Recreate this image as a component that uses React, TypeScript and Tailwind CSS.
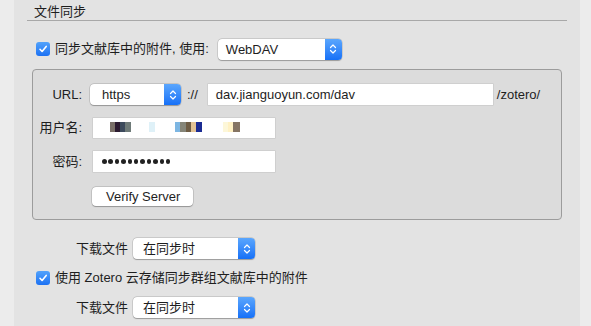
import React from "react";

const font = {
  fontFamily: '"Liberation Sans", "Noto Sans CJK SC", sans-serif',
};

const Chevrons = () => (
  <svg width="8" height="12" viewBox="0 0 8 12" fill="none">
    <path d="M1.5 4.5 L4 2 L6.5 4.5" stroke="white" strokeWidth="1.2" strokeLinecap="round" strokeLinejoin="round" />
    <path d="M1.5 7.5 L4 10 L6.5 7.5" stroke="white" strokeWidth="1.2" strokeLinecap="round" strokeLinejoin="round" />
  </svg>
);

const Select = ({ value, width, pad }: { value: string; width: string; pad: string }) => (
  <div
    className={`flex h-[21px] ${width} rounded-[4px] bg-white shadow-[0_0_0_0.5px_rgba(0,0,0,0.18),0_0.5px_1px_rgba(0,0,0,0.25)]`}
  >
    <span className={`flex-1 ${pad} text-[13px] leading-[21px] text-[#1e1e1e]`}>{value}</span>
    <span className="flex w-[17px] items-center justify-center rounded-r-[4px] bg-gradient-to-b from-[#5aa6fd] to-[#1570f7]">
      <Chevrons />
    </span>
  </div>
);

const Checkbox = () => (
  <span className="flex h-[14px] w-[14px] items-center justify-center rounded-[3px] bg-gradient-to-b from-[#52a2fb] to-[#1c71f3]">
    <svg width="10" height="10" viewBox="0 0 10 10" fill="none">
      <path d="M2 5.3 L4.1 7.5 L8.2 2.4" stroke="white" strokeWidth="1.6" strokeLinecap="round" strokeLinejoin="round" />
    </svg>
  </span>
);

// pixelated (blurred) username
const blurBlocks = [
  { x: 17, w: 5, c: "#7a7068" },
  { x: 22, w: 5, c: "#2c1b30" },
  { x: 27, w: 5, c: "#3c4a5c" },
  { x: 32, w: 6, c: "#6e7a78" },
  { x: 56, w: 6, c: "#dff1f8" },
  { x: 82, w: 5, c: "#7db6e2" },
  { x: 87, w: 6, c: "#858578" },
  { x: 93, w: 5, c: "#6e5c44" },
  { x: 98, w: 5, c: "#e2c294" },
  { x: 103, w: 6, c: "#1b2b92" },
  { x: 130, w: 5, c: "#fdf7d9" },
  { x: 135, w: 5, c: "#fff1c4" },
  { x: 140, w: 7, c: "#857463" },
];

export default function App() {
  return (
    <div className="flex h-[326px] w-[591px] overflow-hidden text-[#1e1e1e]" style={font}>
      <div className="w-[14px] bg-[#ececec]" />
      <div className="flex flex-1 flex-col bg-[#e3e3e3] px-[13px] pt-[4px]">
        <div className="h-[16px] pl-[7px] text-[13px] leading-[16px]">文件同步</div>
        <div className="h-px bg-[#a8a8a8]" />

        <div className="mt-[17px] flex h-[22px] items-center pl-[9px]">
          <Checkbox />
          <span className="ml-[5px] text-[13px]">同步文献库中的附件, 使用:</span>
          <div className="ml-[9px]">
            <Select value="WebDAV" width="w-[124px]" pad="pl-[8px]" />
          </div>
        </div>

        <div className="mx-[5px] mt-[9px] flex h-[151px] flex-col rounded-[4px] border border-[#9c9c9c] bg-[#dcdcdc] pt-[14px]">
          <div className="flex h-[21px] items-center">
            <span className="w-[49px] text-right text-[13px]">URL:</span>
            <div className="ml-[8px]">
              <Select value="https" width="w-[91px]" pad="pl-[12px]" />
            </div>
            <span className="ml-[6px] text-[13px]">://</span>
            <div className="ml-[10px] h-[21px] w-[285px] bg-white pl-[8px] text-[13px] leading-[21px] shadow-[0_0_0_0.5px_rgba(0,0,0,0.12)]">
              dav.jianguoyun.com/dav
            </div>
            <span className="ml-[4px] text-[13px]">/zotero/</span>
          </div>

          <div className="mt-[13px] flex h-[20px] items-center">
            <span className="w-[49px] text-right text-[13px]">用户名:</span>
            <div className="relative ml-[11px] h-[20px] w-[182px] bg-white shadow-[0_0_0_0.5px_rgba(0,0,0,0.12)]">
              {blurBlocks.map((b, i) => (
                <span
                  key={i}
                  className="absolute top-[4px] h-[10px]"
                  style={{ left: b.x, width: b.w, background: b.c }}
                />
              ))}
            </div>
          </div>

          <div className="mt-[13px] flex h-[21px] items-center">
            <span className="w-[49px] text-right text-[13px]">密码:</span>
            <div className="ml-[11px] flex h-[21px] w-[182px] items-center gap-[1.9px] bg-white pl-[9px] shadow-[0_0_0_0.5px_rgba(0,0,0,0.12)]">
              {Array.from({ length: 11 }).map((_, i) => (
                <span key={i} className="h-[4.5px] w-[4.5px] rounded-full bg-[#222]" />
              ))}
            </div>
          </div>

          <div className="mt-[15px] pl-[59px]">
            <div className="h-[19px] w-[101px] rounded-[4px] bg-white pl-[14px] text-[13px] leading-[19px] shadow-[0_0_0_0.5px_rgba(0,0,0,0.2),0_0.5px_1px_rgba(0,0,0,0.25)]">
              Verify Server
            </div>
          </div>
        </div>

        <div className="mt-[18px] flex h-[21px] items-center">
          <span className="w-[101px] text-right text-[13px]">下载文件</span>
          <div className="ml-[5px]">
            <Select value="在同步时" width="w-[122px]" pad="pl-[10px]" />
          </div>
        </div>

        <div className="mt-[11px] flex h-[16px] items-center pl-[9px]">
          <Checkbox />
          <span className="ml-[5px] text-[13px]">使用 Zotero 云存储同步群组文献库中的附件</span>
        </div>

        <div className="mt-[11px] flex h-[21px] items-center">
          <span className="w-[101px] text-right text-[13px]">下载文件</span>
          <div className="ml-[5px]">
            <Select value="在同步时" width="w-[122px]" pad="pl-[10px]" />
          </div>
        </div>
      </div>
      <div className="w-[11px] bg-[#ececec]" />
    </div>
  );
}
